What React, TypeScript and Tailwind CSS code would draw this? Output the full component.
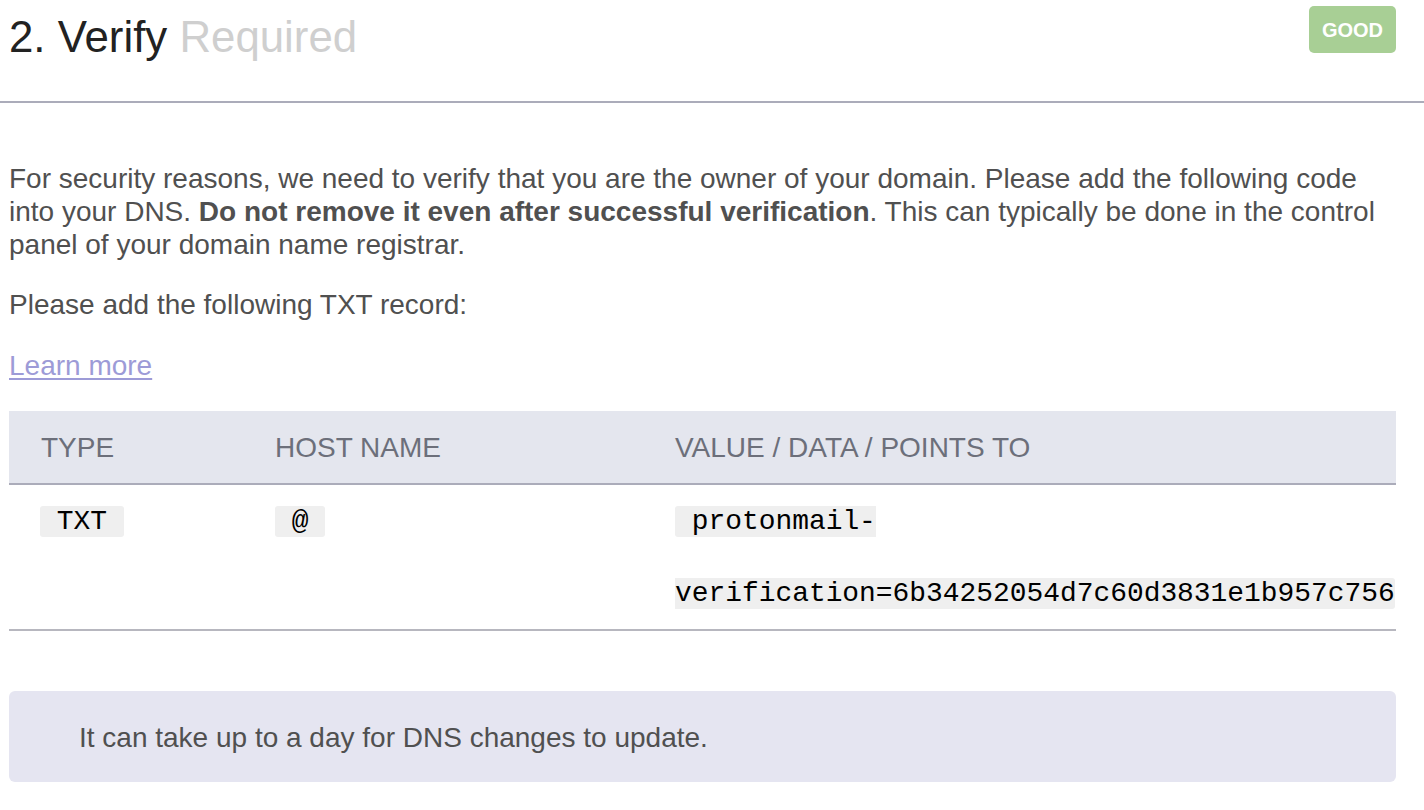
import React from 'react';

const sans = "font-['Liberation_Sans',Arial,sans-serif]";
const mono = "font-['Liberation_Mono','Courier_New',monospace]";

const Code: React.FC<{ children: React.ReactNode; wrap?: boolean }> = ({ children, wrap }) => (
  <code
    className={`${mono} text-[27.9px] text-black bg-[#efefef] rounded-[3px] ${wrap ? 'whitespace-pre-wrap' : 'whitespace-pre'}`}
  >
    {children}
  </code>
);

const App: React.FC = () => {
  return (
    <div className={`${sans} w-full min-h-screen bg-white text-[#505050]`}>
      {/* section header */}
      <div className="flex items-start justify-between pl-[9px] pr-[28px] h-[101px]">
        <h2 className="text-[43.8px] leading-none pt-[15px] font-normal">
          <span className="text-[#222222]">2. Verify</span>{' '}
          <span className="text-[#cfcfcf]">Required</span>
        </h2>
        <span className="mt-[6px] w-[87px] h-[47px] flex items-center justify-center rounded-[5px] bg-[#a8cf95] text-white text-[20px] font-bold">
          GOOD
        </span>
      </div>
      <div className="h-[2px] bg-[#abacba]" />

      <div className="pl-[9px] pr-[28px] pt-[59px] pb-8 text-[28px] leading-[33px]">
        <p>
          For security reasons, we need to verify that you are the owner of your domain. Please add the following code
          into your DNS. <strong className="font-bold">Do not remove it even after successful verification</strong>. This can
          typically be done in the control panel of your domain name registrar.
        </p>
        <p className="mt-[27px]">Please add the following TXT record:</p>
        <p className="mt-[28px]">
          <a href="#" className="text-[#9d9bd7] underline underline-offset-[3px] decoration-[1.5px]">Learn more</a>
        </p>

        <div className="mt-[29px]">
          <div className="grid grid-cols-[234px_400px_1fr] h-[74px] items-center bg-[#e4e6ee] border-b-2 border-[#abacba] text-[#6c6f7a]">
            <div className="pl-[32px]">TYPE</div>
            <div className="pl-[32px]">HOST NAME</div>
            <div className="pl-[32px]">VALUE / DATA / POINTS TO</div>
          </div>
          <div className="grid grid-cols-[234px_400px_1fr] border-b-2 border-[#b7b7bf] leading-[70px]">
            <div className="pl-[31px]">
              <Code> TXT </Code>
            </div>
            <div className="pl-[32px]">
              <Code> @ </Code>
            </div>
            <div className="pl-[32px] min-w-0">
              <Code wrap>{' protonmail-verification=6b34252054d7c60d3831e1b957c756'}</Code>
            </div>
          </div>
        </div>

        <div className="mt-[60px] h-[91px] flex items-center pl-[70px] pt-[2px] rounded-[6px] bg-[#e5e5f1]">
          It can take up to a day for DNS changes to update.
        </div>
      </div>
    </div>
  );
};

export default App;
